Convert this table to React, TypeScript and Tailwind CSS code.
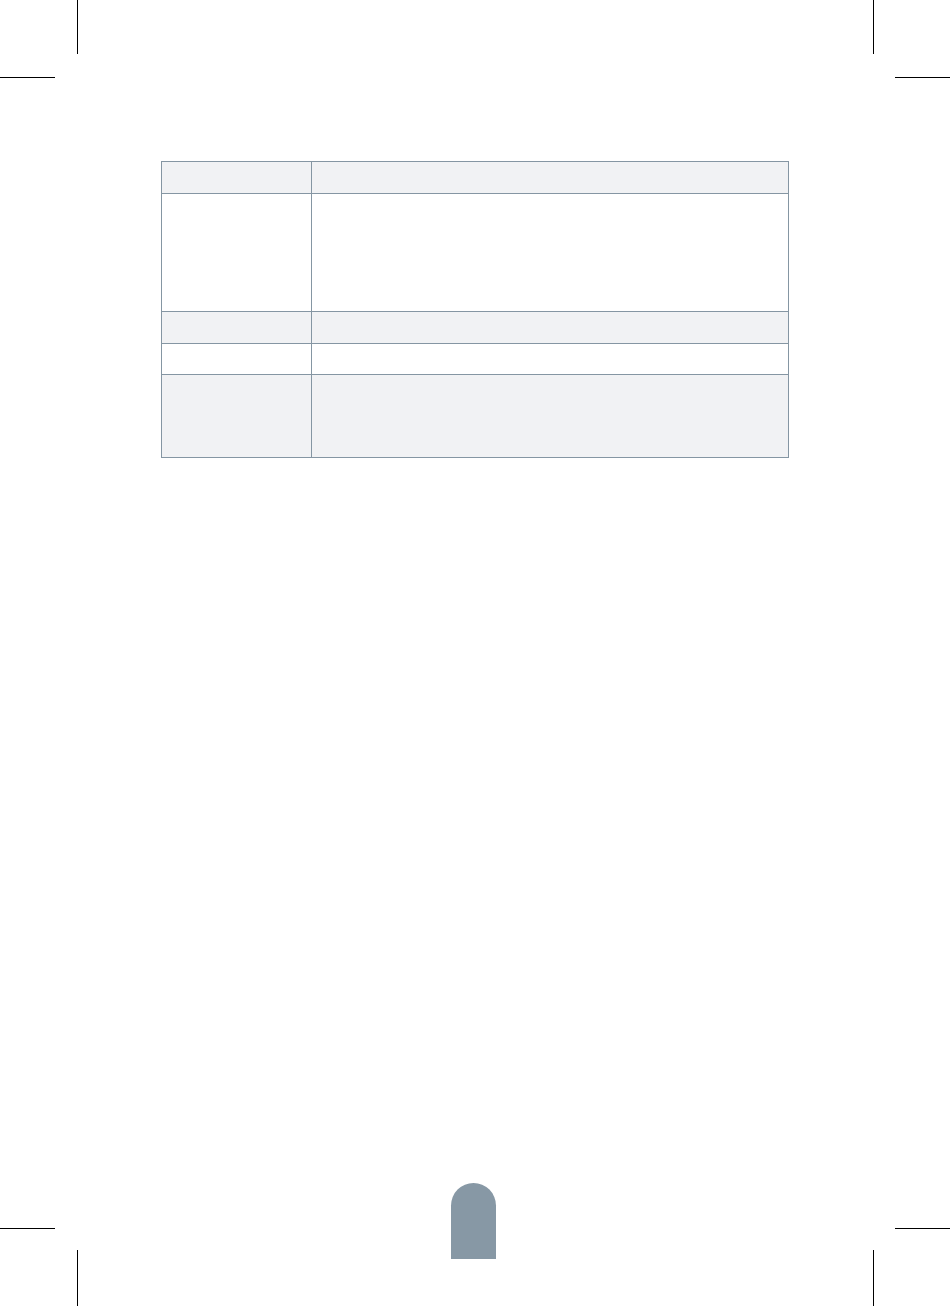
const rows = [
  { h: "h-[31px]", shaded: true },
  { h: "h-[117px]", shaded: false },
  { h: "h-[31px]", shaded: true },
  { h: "h-[30px]", shaded: false },
  { h: "h-[82px]", shaded: true },
];

function MarkColumn({ side }: { side: "left" | "right" }) {
  const vert = side === "left" ? "ml-[77px]" : "ml-px";
  const horiz = side === "left" ? "" : "ml-[23px]";
  return (
    <div className="flex flex-col">
      <div className={`${vert} h-[54px] w-px bg-black`} />
      <div className={`${horiz} mt-[23px] h-px w-[55px] bg-black`} />
      <div className="flex-1" />
      <div className={`${horiz} h-px w-[55px] bg-black`} />
      <div className={`${vert} mt-[21px] h-[56px] w-px bg-black`} />
    </div>
  );
}

export default function App() {
  return (
    <div className="grid h-[1306px] w-[950px] grid-cols-[78px_1fr_78px] overflow-hidden bg-white font-['Liberation_Sans',sans-serif]">
      <MarkColumn side="left" />
      <div className="flex flex-col pt-[161px]">
        <div className="ml-[83px] w-[628px] border border-[#8596a3]">
          {rows.map((row, i) => (
            <div
              key={i}
              className={`grid grid-cols-[150px_1fr] ${i > 0 ? "border-t border-[#8596a3]" : ""} ${
                row.shaded ? "bg-[#f1f2f4]" : "bg-white"
              }`}
            >
              <div className={`${row.h} border-r border-[#8596a3]`} />
              <div className={row.h} />
            </div>
          ))}
        </div>
        <div className="mt-auto mb-[47px] ml-[373px] h-[76px] w-[45px] rounded-t-full bg-[#8798a5]" />
      </div>
      <MarkColumn side="right" />
    </div>
  );
}
